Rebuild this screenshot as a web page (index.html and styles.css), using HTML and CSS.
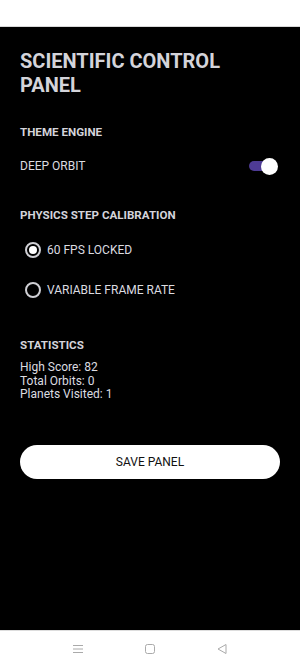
FILE: index.html
```html
<!DOCTYPE html>
<html lang="en">
<head>
    <meta charset="UTF-8">
    <meta name="viewport" content="width=device-width, initial-scale=1.0">
    <title>Scientific Control Panel</title>
    <link rel="stylesheet" href="styles.css">
</head>
<body>
    <div class="status-bar"></div>
    <div class="panel">
        <h1>SCIENTIFIC CONTROL PANEL</h1>

        <div class="section-title">THEME ENGINE</div>
        <div class="switch-row">
            <span>DEEP ORBIT</span>
            <div class="switch"><div class="thumb"></div></div>
        </div>

        <div class="section-title physics">PHYSICS STEP CALIBRATION</div>
        <div class="radio-row">
            <span class="radio checked"></span>
            <span>60 FPS LOCKED</span>
        </div>
        <div class="radio-row">
            <span class="radio"></span>
            <span>VARIABLE FRAME RATE</span>
        </div>

        <div class="section-title stats-title">STATISTICS</div>
        <div class="stats">
            <div>High Score: 82</div>
            <div>Total Orbits: 0</div>
            <div>Planets Visited: 1</div>
        </div>

        <button class="save-btn">SAVE PANEL</button>
    </div>
    <div class="nav-bar">
        <svg width="12" height="12" viewBox="0 0 12 12"><path d="M1 2.5h10M1 6h10M1 9.5h10" stroke="#aaa" stroke-width="1" fill="none"/></svg>
        <svg width="12" height="12" viewBox="0 0 12 12"><rect x="1.5" y="1.5" width="9" height="9" rx="2" stroke="#aaa" stroke-width="1" fill="none"/></svg>
        <svg width="12" height="12" viewBox="0 0 12 12"><path d="M10 1.5v9L2 6z" stroke="#aaa" stroke-width="1" stroke-linejoin="round" fill="none"/></svg>
    </div>
</body>
</html>
```

FILE: styles.css
```css
body {
    margin: 0;
    font-family: Roboto, "Liberation Sans", sans-serif;
    background-color: #000;
    color: #dcdce0;
}
.status-bar {
    height: 26px;
    background-color: #fff;
    border-bottom: 1px solid #d8d8d8;
}
.panel {
    height: 603px;
    padding: 22px 20px 0 20px;
    box-sizing: border-box;
    background-color: #000;
}
h1 {
    margin: 0 0 28px 0;
    font-size: 20px;
    font-weight: 700;
    line-height: 24px;
    color: #d4d4da;
}
.section-title {
    font-size: 11.6px;
    font-weight: 700;
    line-height: 14px;
    color: #d4d4da;
}
.switch-row {
    display: flex;
    justify-content: space-between;
    align-items: center;
    margin-top: 20px;
    height: 14px;
    font-size: 12px;
}
.switch {
    position: relative;
    width: 26px;
    height: 10px;
    margin-right: 5px;
    border-radius: 5px;
    background-color: #4e3b94;
}
.thumb {
    position: absolute;
    right: -3px;
    top: -3px;
    width: 17px;
    height: 17px;
    border-radius: 50%;
    background-color: #fff;
}
.physics {
    margin-top: 35px;
}
.radio-row {
    display: flex;
    align-items: center;
    gap: 6px;
    margin-left: 5px;
    height: 40px;
    font-size: 12px;
}
.physics + .radio-row {
    margin-top: 8px;
}
.radio {
    width: 12px;
    height: 12px;
    border: 2px solid #cfcfd4;
    border-radius: 50%;
    box-sizing: content-box;
    position: relative;
}
.radio.checked::after {
    content: "";
    position: absolute;
    left: 2px;
    top: 2px;
    width: 8px;
    height: 8px;
    border-radius: 50%;
    background-color: #fff;
}
.stats-title {
    margin-top: 28px;
}
.stats {
    margin-top: 9px;
    font-size: 12px;
    line-height: 13.5px;
}
.save-btn {
    display: block;
    width: 100%;
    height: 34px;
    margin-top: 43px;
    border: none;
    border-radius: 17px;
    background-color: #fff;
    color: #111;
    font-family: Roboto, "Liberation Sans", sans-serif;
    font-size: 12px;
}
.nav-bar {
    height: 37px;
    background-color: #fff;
    border-top: 1px solid #ddd;
    box-sizing: border-box;
    display: flex;
    justify-content: space-between;
    align-items: center;
    padding: 0 72px;
}
```
